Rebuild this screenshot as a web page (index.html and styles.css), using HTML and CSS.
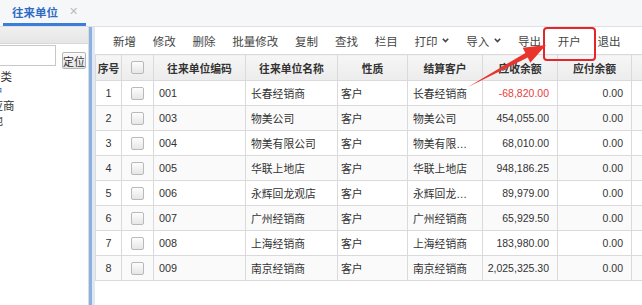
FILE: index.html
```html
<!DOCTYPE html>
<html lang="zh-CN">
<head>
  <meta charset="UTF-8">
  <title>往来单位</title>
  <link rel="stylesheet" href="styles.css">
</head>
<body>
  <div class="tabbar">
    <div class="tab active">
      <span class="tab-title">往来单位</span>
      <span class="tab-close">✕</span>
    </div>
  </div>

  <div class="main">
    <aside class="side">
      <div class="side-head"></div>
      <div class="search">
        <input class="search-input" type="text">
        <button class="locate">定位</button>
      </div>
      <ul class="tree">
        <li class="root">全部分类</li>
        <li class="child selected">客户</li>
        <li class="child">供应商</li>
        <li class="child">其他</li>
      </ul>
    </aside>

    <div class="splitter"></div>

    <section class="content">
      <div class="toolbar">
        <span class="tool">新增</span>
        <span class="tool">修改</span>
        <span class="tool">删除</span>
        <span class="tool">批量修改</span>
        <span class="tool">复制</span>
        <span class="tool">查找</span>
        <span class="tool">栏目</span>
        <span class="tool">打印<svg class="caret" viewBox="0 0 7 5"><path d="M0.8 0.8 L3.5 3.6 L6.2 0.8" /></svg></span>
        <span class="tool">导入<svg class="caret" viewBox="0 0 7 5"><path d="M0.8 0.8 L3.5 3.6 L6.2 0.8" /></svg></span>
        <span class="tool">导出</span>
        <span class="tool">开户</span>
        <span class="tool">退出</span>
      </div>

      <table class="grid">
        <colgroup>
          <col class="c-no"><col class="c-cb"><col class="c-code"><col class="c-name">
          <col class="c-kind"><col class="c-settle"><col class="c-amt"><col class="c-amt2"><col class="c-rest">
        </colgroup>
        <thead>
          <tr>
            <th>序号</th>
            <th><span class="cb"></span></th>
            <th>往来单位编码</th>
            <th>往来单位名称</th>
            <th>性质</th>
            <th>结算客户</th>
            <th>应收余额</th>
            <th>应付余额</th>
            <th></th>
          </tr>
        </thead>
        <tbody>
          <tr><td class="num">1</td><td class="num"><span class="cb"></span></td><td class="code">001</td><td>长春经销商</td><td class="kind">客户</td><td class="settle">长春经销商</td><td class="amt neg">-68,820.00</td><td class="amt">0.00</td><td></td></tr>
          <tr><td class="num">2</td><td class="num"><span class="cb"></span></td><td class="code">003</td><td>物美公司</td><td class="kind">客户</td><td class="settle">物美公司</td><td class="amt">454,055.00</td><td class="amt">0.00</td><td></td></tr>
          <tr><td class="num">3</td><td class="num"><span class="cb"></span></td><td class="code">004</td><td>物美有限公司</td><td class="kind">客户</td><td class="settle">物美有限公司</td><td class="amt">68,010.00</td><td class="amt">0.00</td><td></td></tr>
          <tr><td class="num">4</td><td class="num"><span class="cb"></span></td><td class="code">005</td><td>华联上地店</td><td class="kind">客户</td><td class="settle">华联上地店</td><td class="amt">948,186.25</td><td class="amt">0.00</td><td></td></tr>
          <tr><td class="num">5</td><td class="num"><span class="cb"></span></td><td class="code">006</td><td>永辉回龙观店</td><td class="kind">客户</td><td class="settle">永辉回龙观店</td><td class="amt">89,979.00</td><td class="amt">0.00</td><td></td></tr>
          <tr><td class="num">6</td><td class="num"><span class="cb"></span></td><td class="code">007</td><td>广州经销商</td><td class="kind">客户</td><td class="settle">广州经销商</td><td class="amt">65,929.50</td><td class="amt">0.00</td><td></td></tr>
          <tr><td class="num">7</td><td class="num"><span class="cb"></span></td><td class="code">008</td><td>上海经销商</td><td class="kind">客户</td><td class="settle">上海经销商</td><td class="amt">183,980.00</td><td class="amt">0.00</td><td></td></tr>
          <tr><td class="num">8</td><td class="num"><span class="cb"></span></td><td class="code">009</td><td>南京经销商</td><td class="kind">客户</td><td class="settle">南京经销商</td><td class="amt">2,025,325.30</td><td class="amt">0.00</td><td></td></tr>
        </tbody>
      </table>
    </section>
  </div>

  <!-- annotation drawn over the screenshot -->
  <svg class="annot" viewBox="0 0 642 305">
    <rect x="544" y="28" width="51" height="32" rx="3" fill="none" stroke="#e3262a" stroke-width="2" />
    <polygon points="468,87 527.8,57.4 530.3,62.8 546,45 522.7,47.8 525.4,53" fill="#e8342c" />
  </svg>
</body>
</html>
```

FILE: styles.css
```css
body {
  margin: 0;
  width: 642px;
  height: 305px;
  overflow: hidden;
  position: relative;
  font-family: "Liberation Sans", "Noto Sans CJK SC", sans-serif;
  font-size: 12px;
  color: #333;
  background: #fff;
}

/* tab strip */
.tabbar {
  height: 26px;
  padding-left: 3px;
  display: flex;
  background: #f6f7f9;
  border-bottom: 1px solid #dde1e6;
}
.tab {
  width: 74px;
  height: 23px;
  padding-left: 9px;
  display: flex;
  align-items: center;
  border-bottom: 3px solid #3b7dd8;
}
.tab-title {
  font-size: 11.5px;
  font-weight: bold;
  color: #2c6cc5;
}
.tab-close {
  margin-left: 11px;
  color: #bcbcbc;
  font-size: 11px;
}

/* body */
.main {
  display: flex;
  height: 278px;
}
.side {
  width: 88px;
  flex: none;
  overflow: hidden;
  background: #fff;
}
.side-head {
  height: 16px;
  background: linear-gradient(#f0f0f0, #e6e6e6);
  border-bottom: 1px solid #d8d8d8;
}
.search {
  display: flex;
  align-items: flex-start;
  height: 25px;
  padding-top: 1px;
}
.search-input {
  width: 56px;
  height: 21px;
  box-sizing: border-box;
  border: 1px solid #c8c8c8;
  border-left: none;
  margin: 0;
  padding: 0;
}
.locate {
  margin: 7px 0 0 6px;
  height: 17px;
  width: 24px;
  padding: 0;
  white-space: nowrap;
  font-family: inherit;
  font-size: 11px;
  color: #333;
  border: 1px solid #b5b5b5;
  border-radius: 2px;
  background: linear-gradient(#fbfbfb, #e4e4e4);
}
.tree {
  list-style: none;
  margin: 0 0 0 -34px;
  padding: 0;
  font-size: 11.5px;
  line-height: 14.5px;
  white-space: nowrap;
}
.tree .child {
  padding-left: 14px;
}
.tree .selected {
  color: #3a72c0;
}

.splitter {
  width: 7px;
  flex: none;
  background: linear-gradient(to right, #d9dde3 0 1px, #8db0df 1px 4px, #dfe8f4 4px 7px);
}

.content {
  flex: 1;
  overflow: hidden;
}

/* toolbar */
.toolbar {
  height: 27px;
  display: flex;
  align-items: center;
  padding-left: 9.6px;
  white-space: nowrap;
  font-size: 11.5px;
}
.tool {
  padding: 0 8.4px;
  color: #444;
  display: flex;
  align-items: center;
}
.caret {
  width: 7px;
  height: 5px;
  margin-left: 5px;
  fill: none;
  stroke: #444;
  stroke-width: 1.6;
}

/* grid */
.grid {
  width: 596px;
  table-layout: fixed;
  border-collapse: collapse;
  font-size: 10.8px;
}
.c-no { width: 26px; }
.c-cb { width: 32px; }
.c-code { width: 92px; }
.c-name { width: 92px; }
.c-kind { width: 70px; }
.c-settle { width: 75px; }
.c-amt { width: 75px; }
.c-amt2 { width: 74px; }
.c-rest { width: 60px; }

.grid th,
.grid td {
  border: 1px solid #dadada;
  padding: 0 5px;
  white-space: nowrap;
  overflow: hidden;
  text-overflow: ellipsis;
}
.grid th {
  height: 25px;
  background: linear-gradient(#f6f6f6, #ececec);
  font-weight: bold;
  text-align: center;
  color: #333;
}
.grid td {
  height: 24px;
}
.grid tbody tr:nth-child(even) td {
  background: #fafafa;
}
.grid th:first-child,
.grid td.num {
  padding: 0;
  text-align: center;
}
.grid td.kind {
  padding-left: 3px;
}
.grid td.settle {
  padding: 0 10px 0 5px;
}
.grid td.amt {
  text-align: right;
  padding: 0 8px 0 0;
  font-size: 10.5px;
}
.grid td.neg {
  color: #e8413c;
}
.cb {
  display: inline-block;
  width: 11px;
  height: 11px;
  border: 1px solid #b9b9b9;
  border-radius: 2px;
  background: linear-gradient(#fdfdfd, #e6e6e6);
  vertical-align: middle;
}

.annot {
  position: absolute;
  left: 0;
  top: 0;
  width: 642px;
  height: 305px;
  pointer-events: none;
}
```
